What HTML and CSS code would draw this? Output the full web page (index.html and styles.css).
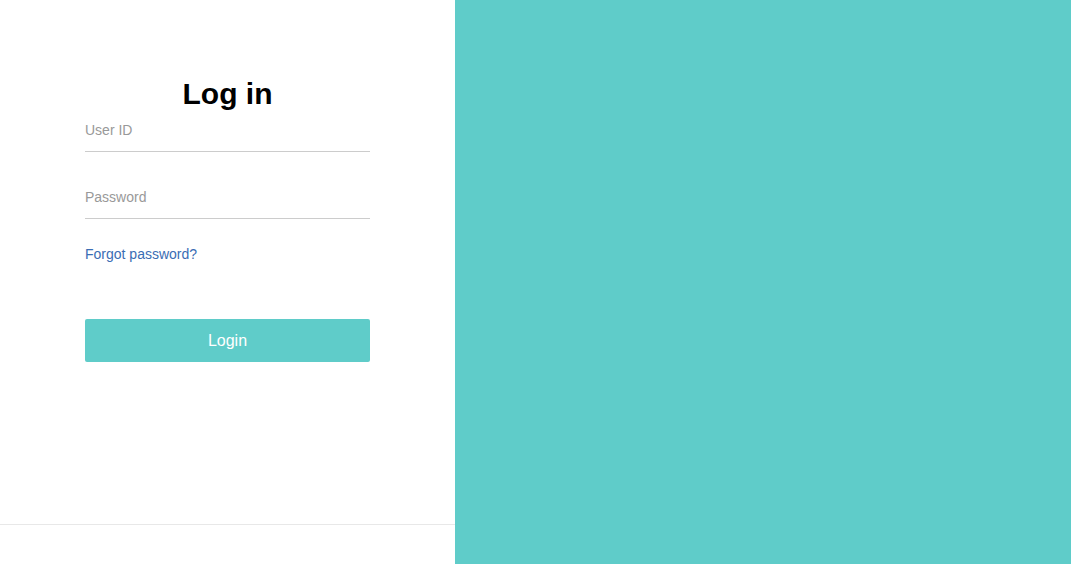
FILE: index.html
```html
<!DOCTYPE html>
<html>
<head>
    <meta charset="UTF-8">
    <meta name="viewport" content="width=device-width, initial-scale=1.0">
    <link rel="stylesheet" href="styles.css">
</head>
<body>
    <div class="page">
        <div class="login-panel">
            <div class="login-main">
                <form class="login-form" onsubmit="return false;">
                    <h1 class="login-title">Log in</h1>
                    <input class="field" type="text" placeholder="User ID">
                    <input class="field field-password" type="password" placeholder="Password">
                    <a class="forgot-link" href="#">Forgot password?</a>
                    <button class="login-btn" type="submit">Login</button>
                </form>
            </div>
            <div class="login-footer"></div>
        </div>
        <div class="side-panel"></div>
    </div>
</body>
</html>
```

FILE: styles.css
```css
html, body {
    height: 100%;
}

body {
    margin: 0;
    font-family: "Liberation Sans", Arial, sans-serif;
}

.page {
    display: flex;
    height: 100%;
}

.login-panel {
    width: 455px;
    flex-shrink: 0;
    display: flex;
    flex-direction: column;
    background-color: #fff;
}

.login-main {
    flex: 1;
    padding-top: 76px;
}

.login-form {
    width: 285px;
    margin: 0 auto;
    display: flex;
    flex-direction: column;
}

.login-title {
    margin: 0 0 11px 0;
    text-align: center;
    font-size: 30px;
    line-height: 36px;
    font-weight: bold;
    color: #000;
}

.field {
    border: none;
    border-bottom: 1px solid #cccccc;
    outline: none;
    padding: 0 0 15px 0;
    margin: 0;
    font-family: inherit;
    font-size: 14px;
    line-height: 16px;
    height: 29px;
    box-sizing: border-box;
    color: #333;
    background: transparent;
}

.field::placeholder {
    color: #999;
}

.field-password {
    margin-top: 38px;
}

.forgot-link {
    margin-top: 27px;
    align-self: flex-start;
    font-size: 14px;
    line-height: 16px;
    color: #3a6db4;
    text-decoration: none;
}

.login-btn {
    margin-top: 57px;
    height: 43px;
    padding-top: 2px;
    border: none;
    border-radius: 2px;
    background-color: #5fccc9;
    color: #fff;
    font-family: inherit;
    font-size: 16px;
    cursor: pointer;
}

.login-footer {
    height: 39px;
    border-top: 1px solid #e8e8e8;
}

.side-panel {
    flex: 1;
    background-color: #5fccc9;
}
```
